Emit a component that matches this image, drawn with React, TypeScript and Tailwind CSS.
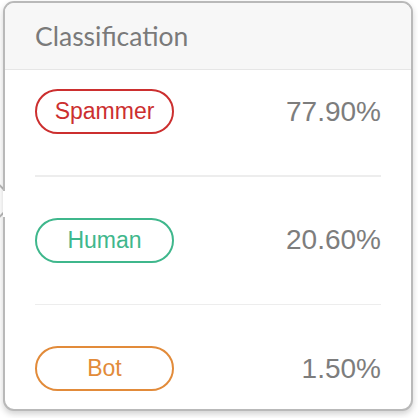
const rows = [
  { label: "Spammer", value: "77.90%", color: "text-[#cc2f2f] border-[#cc2f2f]" },
  { label: "Human", value: "20.60%", color: "text-[#3fb78c] border-[#3fb78c]" },
  { label: "Bot", value: "1.50%", color: "text-[#e28b3a] border-[#e28b3a]" },
];

export default function App() {
  return (
    <div className="relative w-[418px] h-[418px] overflow-hidden bg-white pl-[3px] pt-[1px]">
      {/* arrow pointing left, sits behind the popover */}
      <div className="absolute left-[-17px] top-[187px] w-[28px] h-[28px] rotate-45 border-2 border-[#b9b9b9] bg-white" />
      <div className="relative w-[410px] h-[410px] rounded-[11px] border-2 border-[#b9b9b9] bg-white shadow-[0_3px_6px_rgba(0,0,0,0.18)]">
        <div className="absolute left-[-2px] top-[188px] w-[3px] h-[26px] bg-white" />
        <div className="h-[67px] rounded-t-[9px] border-b border-[#e6e6e6] bg-[#f7f7f7] px-[30px] pt-[17px]">
          <span className="text-[26.5px] leading-[32px] text-[#7a7a7a] font-['Lato','Open_Sans',sans-serif]">
            Classification
          </span>
        </div>
        <div className="px-[30px] pt-[19px] font-['Liberation_Sans',Arial,sans-serif]">
          {rows.map((r, i) => (
            <div key={r.label}>
              {i > 0 && <div className="my-[41px] h-[1.5px] bg-[#ededed]" />}
              <div className="flex h-[45px] items-center justify-between">
                <div
                  className={`flex h-[45px] w-[139px] items-center justify-center rounded-full border-2 text-[23px] ${r.color}`}
                >
                  {r.label}
                </div>
                <span className="text-[28px] text-[#7d7d7d]">{r.value}</span>
              </div>
            </div>
          ))}
        </div>
      </div>
    </div>
  );
}
